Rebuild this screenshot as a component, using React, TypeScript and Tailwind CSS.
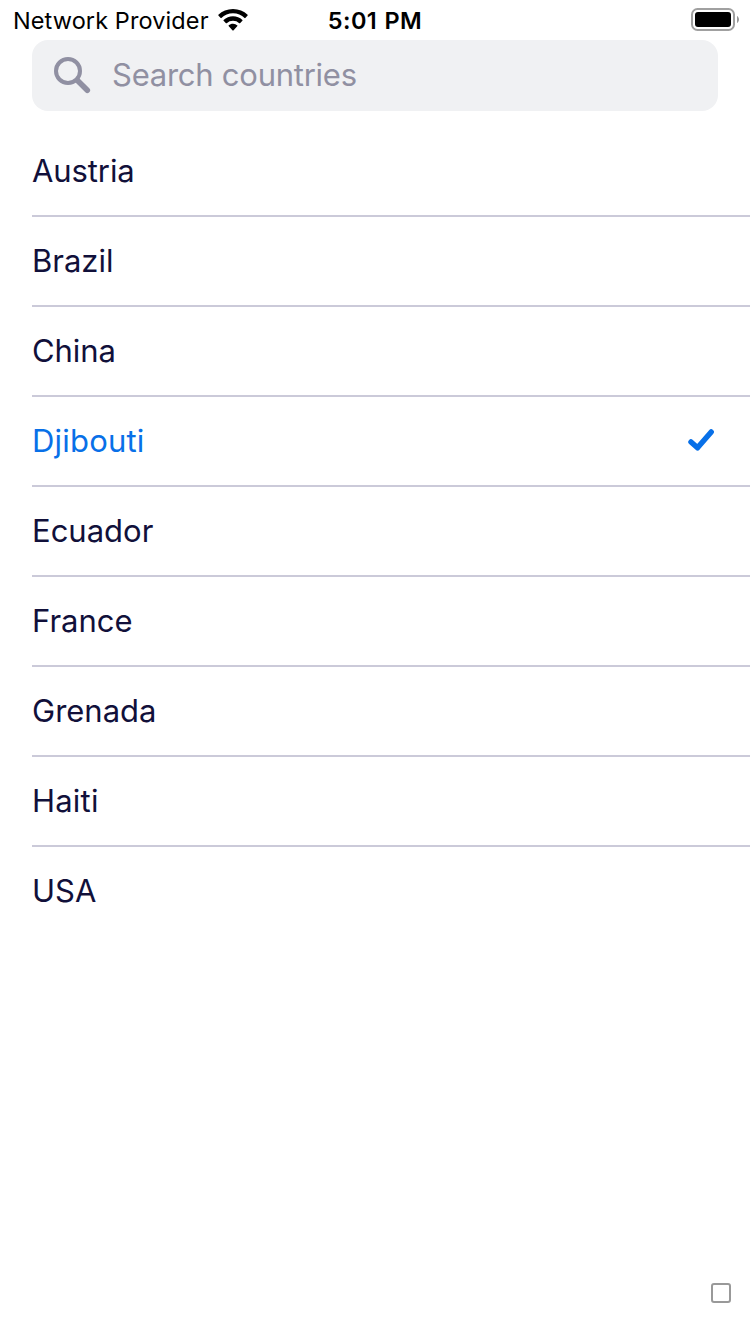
const countries = [
  { name: "Austria", tracking: "tracking-[-0.1px]" },
  { name: "Brazil", tracking: "tracking-normal" },
  { name: "China", tracking: "tracking-[-0.1px]" },
  { name: "Djibouti", tracking: "tracking-[0.2px]" },
  { name: "Ecuador", tracking: "tracking-normal" },
  { name: "France", tracking: "tracking-normal" },
  { name: "Grenada", tracking: "tracking-normal" },
  { name: "Haiti", tracking: "tracking-[0.2px]" },
  { name: "USA", tracking: "tracking-normal" },
];
const selected = "Djibouti";

function StatusBar() {
  return (
    <header className="grid h-10 grid-cols-[1fr_auto_1fr] items-center pl-[13px] pr-[11px] text-black">
      <div className="flex items-center gap-[9px]">
        <span className="pt-0.5 text-[23.5px] tracking-[0.1px]">Network Provider</span>
        <svg width="30" height="22" viewBox="0 0 30 22" fill="black">
          <path d="M15 0C9.300 0 4.100 2.200.4 5.800a.5.5 0 0 0 0 .7l2.300 2.500c.2.200.5.200.7 0C6.400 6.100 10.500 4.300 15 4.300s8.600 1.800 11.600 4.700c.2.200.5.200.7 0l2.300-2.500a.5.5 0 0 0 0-.7C25.900 2.200 20.700 0 15 0Z" />
          <path d="M15 7.300c-3.600 0-6.900 1.400-9.400 3.700a.5.5 0 0 0 0 .7l2.400 2.500c.2.200.5.200.7 0a9.200 9.200 0 0 1 12.600 0c.2.200.5.200.7 0l2.400-2.500a.5.5 0 0 0 0-.7A13.800 13.800 0 0 0 15 7.300Z" />
          <path d="M15 14.800c-1.700 0-3.200.6-4.400 1.600a.5.5 0 0 0 0 .7l4 4.300c.2.200.6.200.8 0l4-4.300a.5.5 0 0 0 0-.7 6.700 6.700 0 0 0-4.400-1.600Z" />
        </svg>
      </div>
      <span className="pr-0.5 pt-0.5 text-[23.5px] font-semibold tracking-[0.4px] [word-spacing:1px]">5:01 PM</span>
      <svg className="justify-self-end" width="48" height="24" viewBox="0 0 48 24" fill="none">
        <rect x="1" y="1" width="42" height="21" rx="5.500" stroke="#a0a0a0" strokeWidth="2" />
        <rect x="4" y="4" width="36" height="15" rx="3" fill="black" />
        <path d="M46 8v7c1.200-.6 2-2 2-3.500S47.200 8.600 46 8Z" fill="#999999" />
      </svg>
    </header>
  );
}

export default function App() {
  return (
    <div className="flex h-[1334px] w-[750px] flex-col bg-white font-['Inter','Liberation_Sans',sans-serif] leading-none text-[#11103a]">
      <StatusBar />
      <div className="mx-8 flex h-[71px] shrink-0 items-center gap-[21px] rounded-2xl bg-[#f0f1f3] pl-[21px] text-[#9090a2]">
        <svg width="38" height="37" viewBox="0 0 38 37" fill="none" stroke="currentColor">
          <circle cx="15" cy="14" r="12" strokeWidth="4" />
          <path d="M24.500 23.500l9.800 9.800" strokeWidth="5.600" strokeLinecap="round" />
        </svg>
        <span className="pb-0.5 text-[31px] tracking-[-0.25px]">Search countries</span>
      </div>
      <ul className="mt-4 pl-8">
        {countries.map(({ name, tracking }) => (
          <li key={name} className={`flex h-[90px] items-center justify-between border-b-2 border-[#cbcad9] pr-9 text-[31px] last:border-b-0 last:pb-0.5 ${name === selected ? "text-[#0870e8]" : ""}`}>
            <span className={`pb-0.5 ${tracking}`}>{name}</span>
            {name === selected && (
              <svg className="mb-0.5" width="26" height="22" viewBox="0 0 26 22" fill="none" stroke="currentColor" strokeWidth="5.500" strokeLinecap="round" strokeLinejoin="round">
                <path d="M3 13l6.500 5.800L23.200 3" />
              </svg>
            )}
          </li>
        ))}
      </ul>
      <div className="mb-[31px] mr-[19px] mt-auto size-5 self-end rounded-[3px] border-2 border-[#999999]" />
    </div>
  );
}
